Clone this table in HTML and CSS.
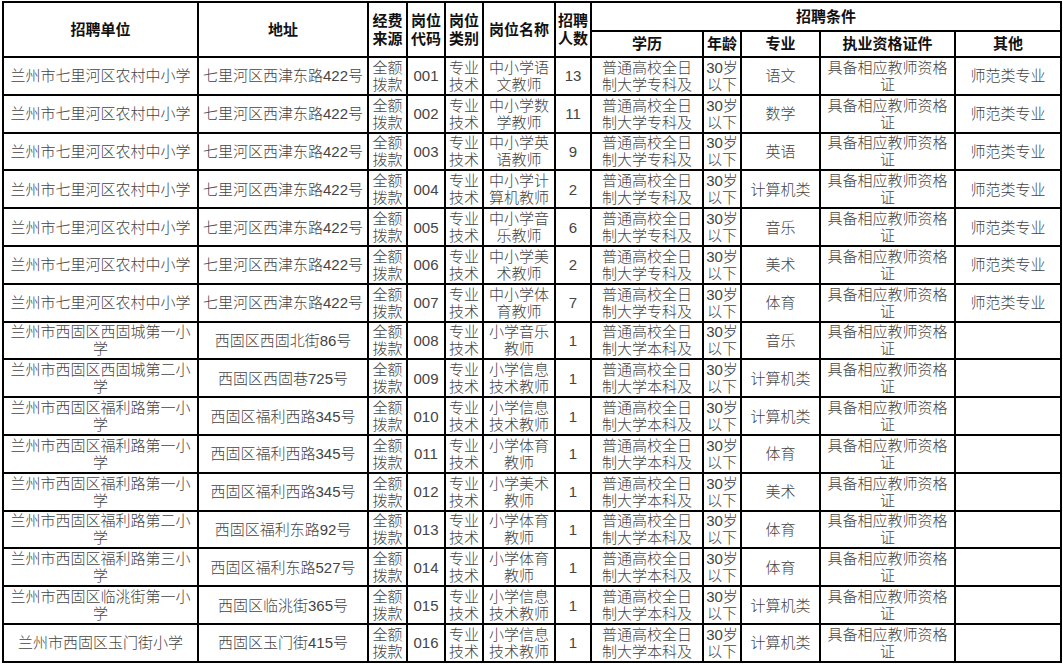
FILE: index.html
```html
<!DOCTYPE html>
<html lang="zh-CN">
<head>
<meta charset="utf-8">
<title>招聘岗位表</title>
<link rel="stylesheet" href="styles.css">
</head>
<body>
<div class="sheet">
  <div class="h r2">招聘单位</div>
  <div class="h r2">地址</div>
  <div class="h r2">经费<br>来源</div>
  <div class="h r2">岗位<br>代码</div>
  <div class="h r2">岗位<br>类别</div>
  <div class="h r2">岗位名称</div>
  <div class="h r2">招聘<br>人数</div>
  <div class="h span5">招聘条件</div>
  <div class="h">学历</div>
  <div class="h">年龄</div>
  <div class="h">专业</div>
  <div class="h">执业资格证件</div>
  <div class="h">其他</div>

  <div class="c">兰州市七里河区农村中小学</div><div class="c">七里河区西津东路422号</div><div class="c">全额<br>拨款</div><div class="c">001</div><div class="c">专业<br>技术</div><div class="c">中小学语<br>文教师</div><div class="c">13</div><div class="c">普通高校全日<br>制大学专科及</div><div class="c">30岁<br>以下</div><div class="c">语文</div><div class="c">具备相应教师资格<br>证</div><div class="c">师范类专业</div>

  <div class="c">兰州市七里河区农村中小学</div><div class="c">七里河区西津东路422号</div><div class="c">全额<br>拨款</div><div class="c">002</div><div class="c">专业<br>技术</div><div class="c">中小学数<br>学教师</div><div class="c">11</div><div class="c">普通高校全日<br>制大学专科及</div><div class="c">30岁<br>以下</div><div class="c">数学</div><div class="c">具备相应教师资格<br>证</div><div class="c">师范类专业</div>

  <div class="c">兰州市七里河区农村中小学</div><div class="c">七里河区西津东路422号</div><div class="c">全额<br>拨款</div><div class="c">003</div><div class="c">专业<br>技术</div><div class="c">中小学英<br>语教师</div><div class="c">9</div><div class="c">普通高校全日<br>制大学专科及</div><div class="c">30岁<br>以下</div><div class="c">英语</div><div class="c">具备相应教师资格<br>证</div><div class="c">师范类专业</div>

  <div class="c">兰州市七里河区农村中小学</div><div class="c">七里河区西津东路422号</div><div class="c">全额<br>拨款</div><div class="c">004</div><div class="c">专业<br>技术</div><div class="c">中小学计<br>算机教师</div><div class="c">2</div><div class="c">普通高校全日<br>制大学专科及</div><div class="c">30岁<br>以下</div><div class="c">计算机类</div><div class="c">具备相应教师资格<br>证</div><div class="c">师范类专业</div>

  <div class="c">兰州市七里河区农村中小学</div><div class="c">七里河区西津东路422号</div><div class="c">全额<br>拨款</div><div class="c">005</div><div class="c">专业<br>技术</div><div class="c">中小学音<br>乐教师</div><div class="c">6</div><div class="c">普通高校全日<br>制大学专科及</div><div class="c">30岁<br>以下</div><div class="c">音乐</div><div class="c">具备相应教师资格<br>证</div><div class="c">师范类专业</div>

  <div class="c">兰州市七里河区农村中小学</div><div class="c">七里河区西津东路422号</div><div class="c">全额<br>拨款</div><div class="c">006</div><div class="c">专业<br>技术</div><div class="c">中小学美<br>术教师</div><div class="c">2</div><div class="c">普通高校全日<br>制大学专科及</div><div class="c">30岁<br>以下</div><div class="c">美术</div><div class="c">具备相应教师资格<br>证</div><div class="c">师范类专业</div>

  <div class="c">兰州市七里河区农村中小学</div><div class="c">七里河区西津东路422号</div><div class="c">全额<br>拨款</div><div class="c">007</div><div class="c">专业<br>技术</div><div class="c">中小学体<br>育教师</div><div class="c">7</div><div class="c">普通高校全日<br>制大学专科及</div><div class="c">30岁<br>以下</div><div class="c">体育</div><div class="c">具备相应教师资格<br>证</div><div class="c">师范类专业</div>

  <div class="c">兰州市西固区西固城第一小<br>学</div><div class="c">西固区西固北街86号</div><div class="c">全额<br>拨款</div><div class="c">008</div><div class="c">专业<br>技术</div><div class="c">小学音乐<br>教师</div><div class="c">1</div><div class="c">普通高校全日<br>制大学本科及</div><div class="c">30岁<br>以下</div><div class="c">音乐</div><div class="c">具备相应教师资格<br>证</div><div class="c"></div>

  <div class="c">兰州市西固区西固城第二小<br>学</div><div class="c">西固区西固巷725号</div><div class="c">全额<br>拨款</div><div class="c">009</div><div class="c">专业<br>技术</div><div class="c">小学信息<br>技术教师</div><div class="c">1</div><div class="c">普通高校全日<br>制大学本科及</div><div class="c">30岁<br>以下</div><div class="c">计算机类</div><div class="c">具备相应教师资格<br>证</div><div class="c"></div>

  <div class="c">兰州市西固区福利路第一小<br>学</div><div class="c">西固区福利西路345号</div><div class="c">全额<br>拨款</div><div class="c">010</div><div class="c">专业<br>技术</div><div class="c">小学信息<br>技术教师</div><div class="c">1</div><div class="c">普通高校全日<br>制大学本科及</div><div class="c">30岁<br>以下</div><div class="c">计算机类</div><div class="c">具备相应教师资格<br>证</div><div class="c"></div>

  <div class="c">兰州市西固区福利路第一小<br>学</div><div class="c">西固区福利西路345号</div><div class="c">全额<br>拨款</div><div class="c">011</div><div class="c">专业<br>技术</div><div class="c">小学体育<br>教师</div><div class="c">1</div><div class="c">普通高校全日<br>制大学本科及</div><div class="c">30岁<br>以下</div><div class="c">体育</div><div class="c">具备相应教师资格<br>证</div><div class="c"></div>

  <div class="c">兰州市西固区福利路第一小<br>学</div><div class="c">西固区福利西路345号</div><div class="c">全额<br>拨款</div><div class="c">012</div><div class="c">专业<br>技术</div><div class="c">小学美术<br>教师</div><div class="c">1</div><div class="c">普通高校全日<br>制大学本科及</div><div class="c">30岁<br>以下</div><div class="c">美术</div><div class="c">具备相应教师资格<br>证</div><div class="c"></div>

  <div class="c">兰州市西固区福利路第二小<br>学</div><div class="c">西固区福利东路92号</div><div class="c">全额<br>拨款</div><div class="c">013</div><div class="c">专业<br>技术</div><div class="c">小学体育<br>教师</div><div class="c">1</div><div class="c">普通高校全日<br>制大学本科及</div><div class="c">30岁<br>以下</div><div class="c">体育</div><div class="c">具备相应教师资格<br>证</div><div class="c"></div>

  <div class="c">兰州市西固区福利路第三小<br>学</div><div class="c">西固区福利东路527号</div><div class="c">全额<br>拨款</div><div class="c">014</div><div class="c">专业<br>技术</div><div class="c">小学体育<br>教师</div><div class="c">1</div><div class="c">普通高校全日<br>制大学本科及</div><div class="c">30岁<br>以下</div><div class="c">体育</div><div class="c">具备相应教师资格<br>证</div><div class="c"></div>

  <div class="c">兰州市西固区临洮街第一小<br>学</div><div class="c">西固区临洮街365号</div><div class="c">全额<br>拨款</div><div class="c">015</div><div class="c">专业<br>技术</div><div class="c">小学信息<br>技术教师</div><div class="c">1</div><div class="c">普通高校全日<br>制大学本科及</div><div class="c">30岁<br>以下</div><div class="c">计算机类</div><div class="c">具备相应教师资格<br>证</div><div class="c"></div>

  <div class="c">兰州市西固区玉门街小学</div><div class="c">西固区玉门街415号</div><div class="c">全额<br>拨款</div><div class="c">016</div><div class="c">专业<br>技术</div><div class="c">小学信息<br>技术教师</div><div class="c">1</div><div class="c">普通高校全日<br>制大学本科及</div><div class="c">30岁<br>以下</div><div class="c">计算机类</div><div class="c">具备相应教师资格<br>证</div><div class="c"></div>
</div>
</body>
</html>
```
FILE: styles.css
```css
html, body {
  margin: 0;
  padding: 0;
  background: #fff;
}

body {
  font-family: "Liberation Sans", "Noto Sans CJK SC", sans-serif;
}

.sheet {
  display: grid;
  grid-template-columns: 193px 168px 37px 36px 36px 70px 34px 110px 36px 77px 133px 104px;
  grid-template-rows: 27px 24px repeat(16, 35.8px);
  gap: 2px;
  padding: 2px;
  margin: 1px 0 0 2px;
  width: max-content;
  background: #000;
}

.h,
.c {
  background: #fff;
  display: flex;
  align-items: center;
  justify-content: center;
  text-align: center;
  overflow: hidden;
  font-size: 15px;
  white-space: nowrap;
}

.h {
  font-weight: 700;
  color: #111;
  line-height: 18px;
}

.r2 {
  grid-row: span 2;
}

.span5 {
  grid-column: span 5;
}

.c {
  font-weight: 300;
  color: #444;
  line-height: 17px;
}
```
